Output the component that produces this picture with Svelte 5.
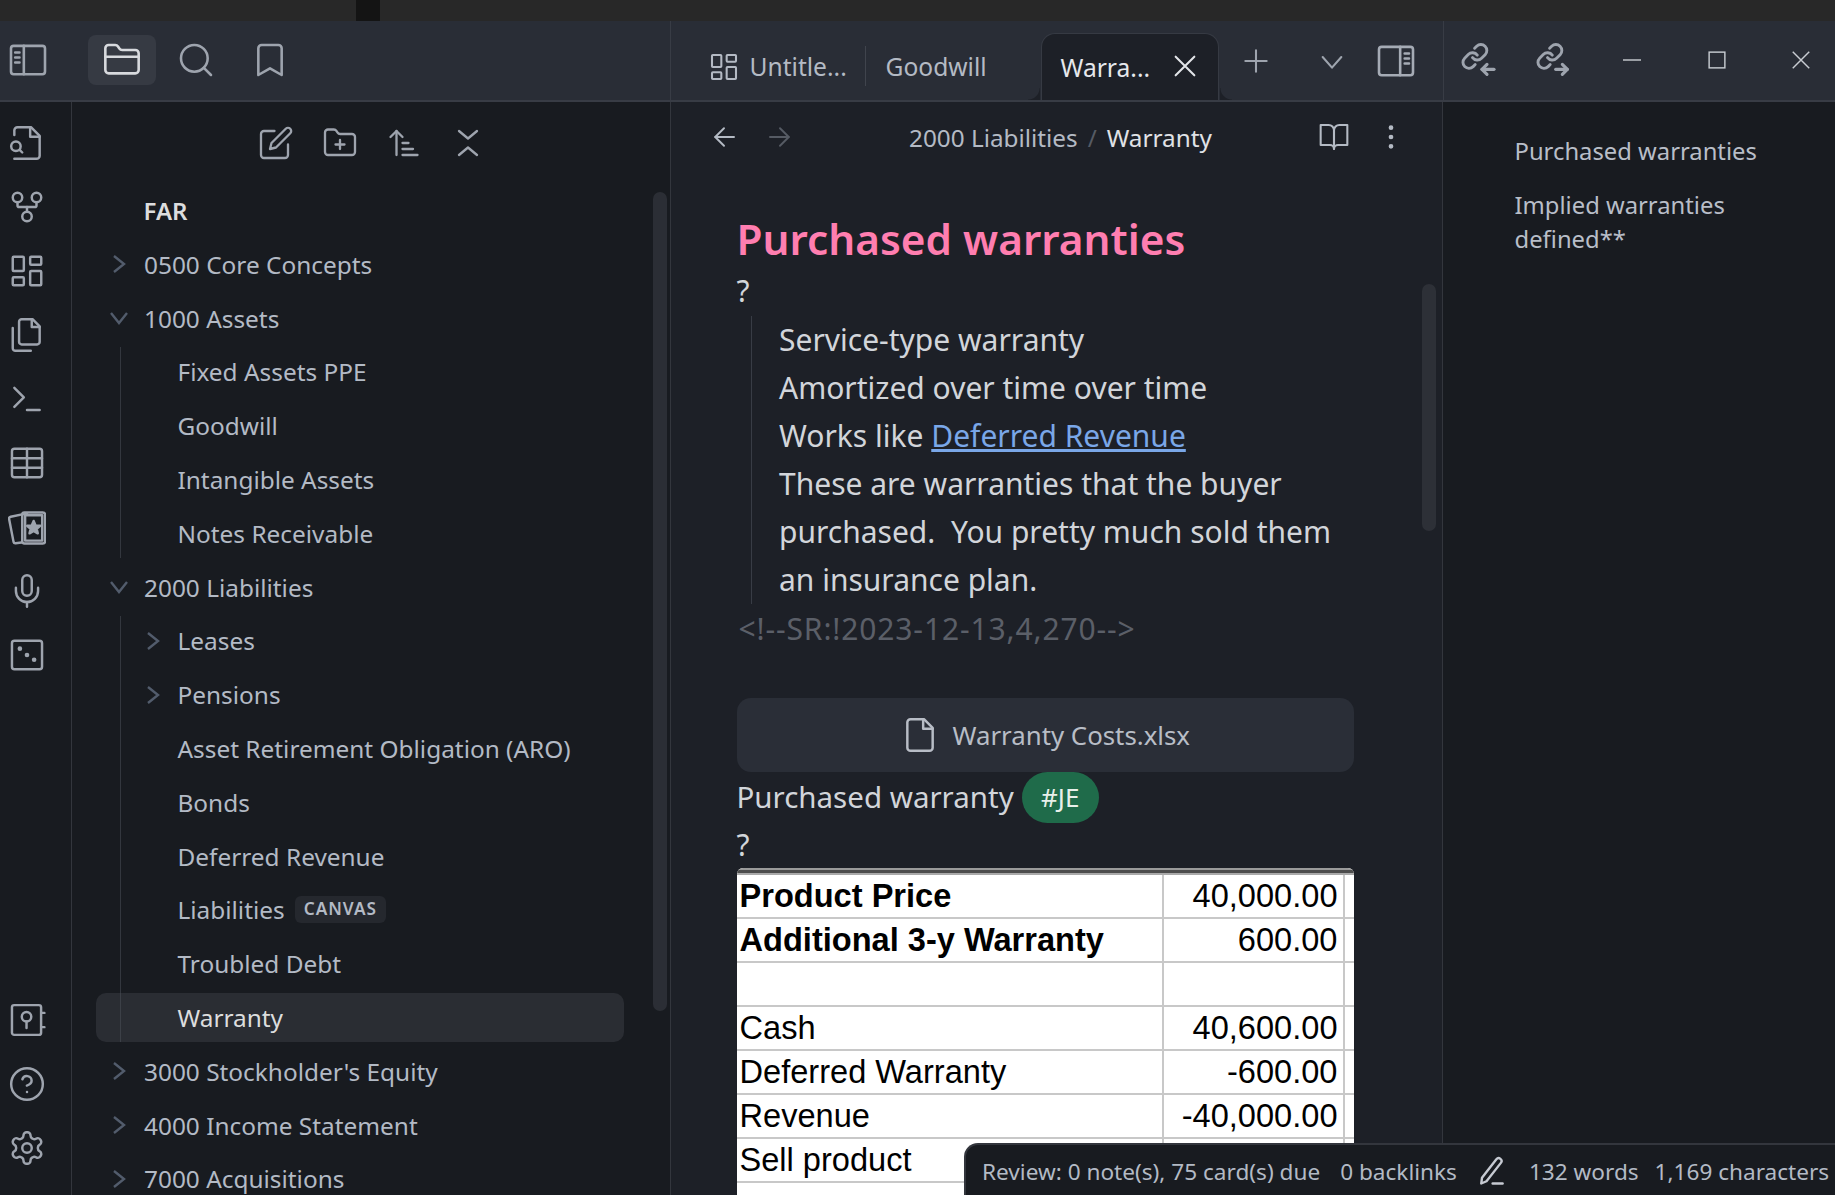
<script>
  const link = '<g transform="translate(1.5 1.2) scale(.72)" stroke-width="2.4"><path d="M10 13a5 5 0 0 0 7.54.54l3-3a5 5 0 0 0-7.07-7.07l-1.72 1.71"/><path d="M14 11a5 5 0 0 0-7.54-.54l-3 3a5 5 0 0 0 7.07 7.07l1.71-1.71"/></g>';
  const icons = {
    sidebarL: '<rect x="1.8" y="3.5" width="20.4" height="17" rx="1.6"/><path d="M9.5 3.5v17"/><path d="M4.3 7.5h2.6M4.3 10.5h2.6M4.3 13.5h2.6"/>',
    sidebarR: '<rect x="1.8" y="3.5" width="20.4" height="17" rx="1.6"/><path d="M14.5 3.5v17"/><path d="M17.2 7.5h2.6M17.2 10.5h2.6M17.2 13.5h2.6"/>',
    folder: '<path d="M20 20a2 2 0 0 0 2-2V8a2 2 0 0 0-2-2h-7.9a2 2 0 0 1-1.69-.9L9.6 3.9A2 2 0 0 0 7.93 3H4a2 2 0 0 0-2 2v13a2 2 0 0 0 2 2Z"/><path d="M2 10h20"/>',
    search: '<circle cx="11" cy="11" r="8"/><path d="m21 21-4.3-4.3"/>',
    bookmark: '<path d="m19 21-7-4-7 4V5a2 2 0 0 1 2-2h10a2 2 0 0 1 2 2v16z"/>',
    edit: '<path d="M11 4H4a2 2 0 0 0-2 2v14a2 2 0 0 0 2 2h14a2 2 0 0 0 2-2v-7"/><path d="M18.5 2.5a2.121 2.121 0 0 1 3 3L12 15l-4 1 1-4 9.5-9.5z"/>',
    folderPlus: '<path d="M20 20a2 2 0 0 0 2-2V8a2 2 0 0 0-2-2h-7.9a2 2 0 0 1-1.69-.9L9.6 3.9A2 2 0 0 0 7.93 3H4a2 2 0 0 0-2 2v13a2 2 0 0 0 2 2Z"/><path d="M12 10v6M9 13h6"/>',
    sort: '<path d="m3 8 4-4 4 4"/><path d="M7 4v16"/><path d="M11 12h4M11 16h7M11 20h10"/>',
    collapse: '<path d="m6 20 6-5 6 5"/><path d="m6 4 6 5 6-5"/>',
    fileSearch: '<path d="M4 22h14a2 2 0 0 0 2-2V7.5L14.5 2H6a2 2 0 0 0-2 2v3"/><path d="M14 2v6h6"/><path d="M5 17a3 3 0 1 0 0-6 3 3 0 0 0 0 6z"/><path d="m9 18-1.5-1.5"/>',
    fork: '<circle cx="12" cy="18" r="3"/><circle cx="6" cy="6" r="3"/><circle cx="18" cy="6" r="3"/><path d="M18 9v2c0 .6-.4 1-1 1H7c-.6 0-1-.4-1-1V9"/><path d="M12 12v3"/>',
    dashboard: '<rect x="3" y="3" width="7" height="9" rx="0.6"/><rect x="14" y="3" width="7" height="5" rx="0.6"/><rect x="14" y="12" width="7" height="9" rx="0.6"/><rect x="3" y="16" width="7" height="5" rx="0.6"/>',
    files: '<path d="M15.5 2H8.6c-.4 0-.8.2-1.1.5-.3.3-.5.7-.5 1.1v12.8c0 .4.2.8.5 1.1.3.3.7.5 1.1.5h9.8c.4 0 .8-.2 1.1-.5.3-.3.5-.7.5-1.1V6.5L15.5 2z"/><path d="M3 7.6v12.8c0 .4.2.8.5 1.1.3.3.7.5 1.1.5h9.8"/><path d="M15 2v5h5"/>',
    terminal: '<path d="m4 17 6-6-6-6"/><path d="M12 19h8"/>',
    table: '<rect x="2.5" y="3" width="19" height="18" rx="1.6"/><path d="M12 3v18M2.5 9h19M2.5 15h19"/>',
    cards: '<path d="M8.5 21.8 4.8 22.3a1.2 1.2 0 0 1-1.3-.9L.7 7a1.3 1.3 0 0 1 1-1.5L12 3.4"/><rect x="9" y="2.8" width="14.4" height="19.6" rx="1.4"/><rect x="10.8" y="4.6" width="10.8" height="16" /><polygon class="fillme" points="16.2,8.2 17.4,11 20.3,11.2 18.1,13.2 18.8,16 16.2,14.5 13.6,16 14.3,13.2 12.1,11.2 15,11"/>',
    mic: '<path d="M12 2a3 3 0 0 0-3 3v7a3 3 0 0 0 6 0V5a3 3 0 0 0-3-3Z"/><path d="M19 10v2a7 7 0 0 1-14 0v-2"/><path d="M12 19v3"/>',
    dice: '<rect x="2.5" y="3" width="19" height="18" rx="1.6"/><circle class="fillme" cx="7.5" cy="8" r=".7"/><circle class="fillme" cx="12" cy="12" r=".7"/><circle class="fillme" cx="16.5" cy="15" r=".7"/>',
    vault: '<rect x="2.5" y="2.6" width="18.4" height="18.8" rx="1.4"/><path d="M21 7.5h2M21 16.5h2"/><circle cx="11.7" cy="10" r="3"/><path d="M11.7 13v4"/>',
    help: '<circle cx="12" cy="12" r="10"/><path d="M9.09 9a3 3 0 0 1 5.83 1c0 2-3 3-3 3"/><path d="M12 17h.01"/>',
    gear: '<path d="M12.22 2h-.44a2 2 0 0 0-2 2v.18a2 2 0 0 1-1 1.73l-.43.25a2 2 0 0 1-2 0l-.15-.08a2 2 0 0 0-2.73.73l-.22.38a2 2 0 0 0 .73 2.73l.15.1a2 2 0 0 1 1 1.72v.51a2 2 0 0 1-1 1.74l-.15.09a2 2 0 0 0-.73 2.73l.22.38a2 2 0 0 0 2.73.73l.15-.08a2 2 0 0 1 2 0l.43.25a2 2 0 0 1 1 1.73V20a2 2 0 0 0 2 2h.44a2 2 0 0 0 2-2v-.18a2 2 0 0 1 1-1.73l.43-.25a2 2 0 0 1 2 0l.15.08a2 2 0 0 0 2.73-.73l.22-.39a2 2 0 0 0-.73-2.73l-.15-.08a2 2 0 0 1-1-1.74v-.5a2 2 0 0 1 1-1.74l.15-.09a2 2 0 0 0 .73-2.73l-.22-.38a2 2 0 0 0-2.73-.73l-.15.08a2 2 0 0 1-2 0l-.43-.25a2 2 0 0 1-1-1.73V4a2 2 0 0 0-2-2z"/><circle cx="12" cy="12" r="3"/>',
    plus: '<path d="M4 12h16M12 4v16"/>',
    chevDown: '<path d="m5 9 7 8 7-8"/>',
    x: '<path d="m5 5 14 14M19 5 5 19"/>',
    back: '<path d="M20 12H5"/><path d="m12 19-7-7 7-7"/>',
    forward: '<path d="M4 12h15"/><path d="m12 5 7 7-7 7"/>',
    book: '<path d="M2 3h6a4 4 0 0 1 4 4v14a3 3 0 0 0-3-3H2z"/><path d="M22 3h-6a4 4 0 0 0-4 4v14a3 3 0 0 1 3-3h7z"/>',
    dots: '<circle class="fillme" cx="12" cy="5" r="1"/><circle class="fillme" cx="12" cy="12" r="1"/><circle class="fillme" cx="12" cy="19" r="1"/>',
    file: '<path d="M14.5 2H6a2 2 0 0 0-2 2v16a2 2 0 0 0 2 2h12a2 2 0 0 0 2-2V7.5L14.5 2z"/><path d="M14 2v6h6"/>',
    pen: '<path d="M15.5 2.6a2.3 2.3 0 0 1 3.6 2.9L7.6 20.2 3.4 22l.6-4.6Z"/><path d="M12.5 22h8"/>',
    linkIn: link + '<path stroke-width="1.9" d="M21.6 17.6H14.4"/><path stroke-width="1.9" d="m17.4 14.6-3 3 3 3"/>',
    linkOut: link + '<path stroke-width="1.9" d="M13.6 17.6h7"/><path stroke-width="1.9" d="m17.6 14.6 3 3-3 3"/>',
    min: '<path d="M0 12h24"/>',
    max: '<rect x="1.5" y="1.5" width="21" height="21"/>',
    close: '<path d="m1 1 22 22M23 1 1 23"/>'
  };

  const ribbonTop = ['fileSearch', 'fork', 'dashboard', 'files', 'terminal', 'table', 'cards', 'mic', 'dice'];
  const ribbonBottom = ['vault', 'help', 'gear'];

  const assets = [
    { name: 'Fixed Assets PPE' }, { name: 'Goodwill' }, { name: 'Intangible Assets' }, { name: 'Notes Receivable' }
  ];
  const liabilities = [
    { name: 'Leases', chev: 'right' }, { name: 'Pensions', chev: 'right' },
    { name: 'Asset Retirement Obligation (ARO)' }, { name: 'Bonds' }, { name: 'Deferred Revenue' },
    { name: 'Liabilities', badge: 'CANVAS' }, { name: 'Troubled Debt' }, { name: 'Warranty', active: true }
  ];

  const tableRows = [
    { a: 'Product Price', b: '40,000.00', bold: true },
    { a: 'Additional 3-y Warranty', b: '600.00', bold: true },
    { a: '', b: '' },
    { a: 'Cash', b: '40,600.00' },
    { a: 'Deferred Warranty', b: '-600.00' },
    { a: 'Revenue', b: '-40,000.00' },
    { a: 'Sell product', b: '' },
    { a: '', b: '' }
  ];
</script>

{#snippet icon(name, cls)}
  <svg class={'ic ' + cls} viewBox="0 0 24 24" aria-hidden="true">{@html icons[name]}</svg>
{/snippet}

{#snippet chev(dir)}
  <svg class="chev" viewBox="0 0 30 30" aria-hidden="true">
    {#if dir === 'right'}<path d="M10 7 20 15 10 23" />{:else}<path d="M7 10 15 20 23 10" />{/if}
  </svg>
{/snippet}

{#snippet folderRow(name, dir)}
  <div class="row top">
    {@render chev(dir)}
    <span>{name}</span>
  </div>
{/snippet}

<div class="page">
  <div class="strip"><div class="notch"></div></div>

  <header class="titlebar">
    <div class="tb-left">
      <div class="tb-toggle">{@render icon('sidebarL', 's40')}</div>
      <div class="tb-btn on">{@render icon('folder', 's40')}</div>
      <div class="tb-btn">{@render icon('search', 's40')}</div>
      <div class="tb-btn">{@render icon('bookmark', 's40')}</div>
    </div>

    <div class="tb-tabs">
      <div class="tab first">{@render icon('dashboard', 's32')}<span>Untitle...</span></div>
      <div class="tab second"><span>Goodwill</span></div>
      <div class="tab active"><span>Warra...</span>{@render icon('x', 's32 light')}</div>
      <div class="tab-act plus">{@render icon('plus', 's32')}</div>
      <div class="tab-act down">{@render icon('chevDown', 's32')}</div>
      <div class="tab-act side">{@render icon('sidebarR', 's40')}</div>
    </div>

    <div class="tb-right">
      <div class="wbox">{@render icon('linkIn', 's40')}</div>
      <div class="wbox g35">{@render icon('linkOut', 's40')}</div>
      <div class="wbox g37">{@render icon('min', 's18 thin')}</div>
      <div class="wbox g45">{@render icon('max', 's18 thin')}</div>
      <div class="wbox g44">{@render icon('close', 's18 thin')}</div>
    </div>
  </header>

  <div class="workspace">
    <nav class="ribbon">
      <div class="rib-group">
        {#each ribbonTop as r}<div class="rib">{@render icon(r, 's38')}</div>{/each}
      </div>
      <div class="rib-group">
        {#each ribbonBottom as r}<div class="rib">{@render icon(r, 's38')}</div>{/each}
      </div>
    </nav>

    <aside class="explorer">
      <div class="nav-actions">
        {@render icon('edit', 's36')}
        {@render icon('folderPlus', 's36')}
        {@render icon('sort', 's36')}
        {@render icon('collapse', 's36')}
      </div>
      <div class="tree">
        <div class="row top root"><span class="far">FAR</span></div>
        {@render folderRow('0500 Core Concepts', 'right')}
        {@render folderRow('1000 Assets', 'down')}
        <div class="children">
          {#each assets as f}
            <div class="row child"><span>{f.name}</span></div>
          {/each}
        </div>
        {@render folderRow('2000 Liabilities', 'down')}
        <div class="children">
          {#each liabilities as f}
            <div class="row child" class:active={f.active} class:hasChev={f.chev}>
              {#if f.chev}{@render chev(f.chev)}{/if}
              <span>{f.name}</span>
              {#if f.badge}<span class="badge">{f.badge}</span>{/if}
            </div>
          {/each}
        </div>
        {@render folderRow("3000 Stockholder's Equity", 'right')}
        {@render folderRow('4000 Income Statement', 'right')}
        {@render folderRow('7000 Acquisitions', 'right')}
      </div>
      <div class="nav-thumb"></div>
    </aside>

    <main class="pane">
      <div class="view-head">
        <div class="vh-arrow">{@render icon('back', 's30')}</div>
        <div class="vh-arrow dim">{@render icon('forward', 's30')}</div>
        <div class="crumbs"><span>2000 Liabilities</span><span class="sep">/</span><span class="cur">Warranty</span></div>
        <div class="vh-book">{@render icon('book', 's32')}</div>
        <div class="vh-dots">{@render icon('dots', 's32')}</div>
      </div>

      <article class="note">
        <h1>Purchased warranties</h1>
        <p>?</p>
        <blockquote>
          Service-type warranty<br />
          Amortized over time over time<br />
          Works like <a href="#deferred">Deferred Revenue</a><br />
          These are warranties that the buyer<br />
          purchased.&nbsp; You pretty much sold them<br />
          an insurance plan.
        </blockquote>
        <p class="comment">&lt;!--SR:!2023-12-13,4,270--&gt;</p>
        <div class="attach">{@render icon('file', 's38')}<span>Warranty Costs.xlsx</span></div>
        <p class="tagline">Purchased warranty <span class="pill">#JE</span></p>
        <p class="q2">?</p>
        <div class="sheet">
          <div class="sheet-top"></div>
          {#each tableRows as t}
            <div class="sheet-row" class:bold={t.bold}>
              <div class="c1">{t.a}</div>
              <div class="c2">{t.b}</div>
              <div class="c3"></div>
            </div>
          {/each}
        </div>
      </article>
      <div class="note-thumb"></div>
    </main>

    <aside class="outline">
      <div class="o-item">Purchased warranties</div>
      <div class="o-item">Implied warranties defined**</div>
    </aside>
  </div>

  <footer class="status">
    <span>Review: 0 note(s), 75 card(s) due</span>
    <span class="st-b">0 backlinks</span>
    {@render icon('pen', 's30 bright')}
    <span class="st-w">132 words</span>
    <span class="st-c">1,169 characters</span>
  </footer>
</div>

<style>
  :global(body) { margin: 0; background: #181b20; }
  .page {
    position: relative;
    width: 1835px;
    height: 1195px;
    overflow: hidden;
    background: #181b20;
    color: #b8bec8;
    font-family: "Noto Sans", "Open Sans", sans-serif;
    font-size: 24.4px;
  }
  .strip { height: 21px; background: #282828; }
  .notch { width: 24px; height: 21px; margin-left: 356px; background: #141414; }

  .ic { fill: none; stroke: currentColor; stroke-width: 1.55; stroke-linecap: round; stroke-linejoin: round; display: block; flex: none; }
  .ic :global(.fillme) { fill: currentColor; }
  .s40 { width: 40px; height: 40px; }
  .s38 { width: 38px; height: 38px; }
  .s36 { width: 36px; height: 36px; }
  .s32 { width: 32px; height: 32px; }
  .s30 { width: 30px; height: 30px; }
  .s18 { width: 18px; height: 18px; }
  .thin { stroke-width: 1.9; stroke-linecap: butt; stroke-linejoin: miter; color: #c8ccd2; }
  .light { color: #e2e4e8; }
  .bright { color: #c6cad2; stroke-width: 1.9; }

  .titlebar { display: flex; height: 79px; background: #292d36; border-bottom: 2px solid #383c45; color: #9ea4ae; box-sizing: content-box; }
  .tb-left { width: 671px; flex: none; display: flex; align-items: center; gap: 6.5px; border-right: 1.5px solid #383c45; box-sizing: border-box; padding-left: 8px; padding-bottom: 2px; }
  .tb-toggle { width: 40px; margin-right: 33.5px; }
  .tb-btn { width: 67.5px; height: 50px; display: flex; align-items: center; justify-content: center; border-radius: 8px; }
  .tb-btn.on { background: #363a43; color: #d8dade; }

  .tb-tabs { width: 772px; flex: none; display: flex; align-items: flex-end; box-sizing: border-box; }
  .tab { display: flex; align-items: center; height: 67px; box-sizing: border-box; color: #b4bac4; font-size: 24.6px; }
  .tab.first { width: 195px; padding-left: 37px; gap: 9.5px; position: relative; }
  .tab.first::after { content: ""; position: absolute; right: 0; top: 13px; height: 40px; width: 1.5px; background: #40444d; }
  .tab.second { width: 174.5px; padding-left: 19.5px; }
  .tab.active {
    position: relative;
    width: 178.5px;
    padding-left: 19px;
    padding-right: 17px;
    background: #1d2027;
    color: #e6e8ec;
    border-radius: 14px 14px 0 0;
    border: 1.5px solid #363a43;
    border-bottom: none;
    justify-content: space-between;
  }
  .tab.active .ic { margin-top: -2px; }
  .tab.active::before, .tab.active::after { content: ""; position: absolute; bottom: 0; width: 12px; height: 12px; }
  .tab.active::before { left: -13.5px; background: radial-gradient(circle at 0 0, #292d36 11px, #1d2027 12px); }
  .tab.active::after { right: -13.5px; background: radial-gradient(circle at 100% 0, #292d36 11px, #1d2027 12px); }
  .tab-act { height: 67px; display: flex; align-items: center; justify-content: center; width: 40px; padding-bottom: 12px; box-sizing: border-box; }
  .tab-act.plus { margin-left: 16.5px; }
  .tab-act.down { margin-left: 36px; }
  .tab-act.side { margin-left: 24px; color: #a5abb5; }

  .tb-right { flex: 1; display: flex; align-items: center; padding-left: 14px; border-left: 1.5px solid #383c45; padding-bottom: 1px; }
  .wbox { width: 40px; display: flex; justify-content: center; }
  .g35 { margin-left: 35px; }
  .g37 { margin-left: 38.5px; }
  .g45 { margin-left: 45px; }
  .g44 { margin-left: 44px; }

  .workspace { display: flex; height: 1094px; }
  .ribbon { width: 71.5px; flex: none; box-sizing: border-box; border-right: 1.5px solid #33363d; display: flex; flex-direction: column; justify-content: space-between; padding: 9px 0 16px; height: 1094px; color: #9ea4ae; }
  .rib-group { display: flex; flex-direction: column; }
  .rib { width: 54px; height: 64px; display: flex; align-items: center; justify-content: center; }

  .explorer { position: relative; width: 598.5px; flex: none; background: #181b20; border-right: 1.5px solid #33363d; }
  .nav-actions { display: flex; height: 84px; box-sizing: border-box; padding-bottom: 2px; align-items: center; justify-content: flex-start; padding-left: 186px; gap: 28.3px; color: #9ea4ae; }
  .tree { margin-left: 24.5px; width: 528px; }
  .row { display: flex; align-items: center; height: 49px; margin-bottom: 4.8px; color: #b3bac5; }
  .row.top { padding-left: 8px; gap: 10px; }
  .row.root { padding-left: 47.5px; }
  .far { font-weight: 600; color: #dcddde; font-size: 24px; }
  .chev { width: 30px; height: 30px; fill: none; stroke: #525c6c; stroke-width: 2.4; flex: none; }
  .children { margin-left: 24px; border-left: 1.5px solid #33373e; }
  .children .row { padding-left: 56.5px; }
  .children .row.hasChev { padding-left: 16.5px; gap: 10px; }
  .children .row.active { margin-left: -25.5px; padding-left: 82px; background: #2a2d33; border-radius: 10px; color: #dcddde; position: relative; }
  .children .row.active::before { content: ""; position: absolute; left: 24px; top: 0; bottom: 0; width: 1.5px; background: #3c4047; }
  .badge { margin-left: 10px; padding: 0 9px; height: 27px; line-height: 26px; background: #25282e; border-radius: 6px; font-size: 17.2px; font-weight: 600; letter-spacing: 1px; color: #b3bac5; }
  .nav-thumb { position: absolute; right: 3px; top: 90px; width: 14px; height: 819px; background: #2b2e35; border-radius: 7px; }

  .pane { position: relative; width: 771px; flex: none; background: #1d2027; box-sizing: content-box; border-right: 1.5px solid #33363d; overflow: hidden; }
  .view-head { position: relative; display: flex; align-items: center; height: 72px; padding-left: 38px; padding-bottom: 2px; box-sizing: border-box; color: #b4bac4; }
  .vh-arrow { width: 30px; margin-right: 26px; }
  .vh-arrow.dim { color: #565b64; }
  .crumbs { margin-left: 88px; display: flex; align-items: center; gap: 10px; font-size: 24.3px; }
  .sep { color: #565b64; }
  .cur { color: #e0e2e6; }
  .vh-book { margin-left: 106px; }
  .vh-dots { margin-left: 25px; }

  .note { padding-left: 65.5px; width: 617.5px; color: #d2d5da; font-size: 30px; line-height: 48px; }
  .note p { margin: 0; }
  h1 { margin: 39px 0 0; height: 54px; line-height: 52px; font-size: 42.3px; font-weight: 600; color: #ff7eb0; }
  blockquote { margin: 1px 0 0 14.5px; padding-left: 27px; border-left: 1.5px solid #383c45; }
  a { color: #7aa7e8; text-decoration: underline; }
  .note .comment { color: #5b5f68; margin-top: 1px; letter-spacing: .87px; padding-left: 2px; }
  .attach { display: flex; align-items: center; justify-content: center; gap: 14px; height: 74px; margin-top: 45px; background: #2a2e37; border-radius: 14px; color: #b8bdc6; font-size: 25.8px; }
  .note .tagline { display: flex; align-items: center; gap: 8px; height: 48px; margin-top: 1px; font-size: 29.5px; }
  .pill { display: flex; align-items: center; justify-content: center; width: 77px; height: 51px; border-radius: 26px; background: #1f6b4a; color: #e8f0ea; font-size: 26px; flex: none; }
  .note .q2 { margin-top: 0; }
  .sheet { margin-top: -1px; background: #fff; color: #000; font-family: "Liberation Sans", Arial, sans-serif; font-size: 32.6px; line-height: 42px; border-radius: 6px 6px 0 0; overflow: hidden; }
  .sheet-top { height: 7px; background: linear-gradient(#9a9a9a 0 2px, #4d4d4d 2px 5px, #aaa 5px); }
  .sheet-row { display: grid; grid-template-columns: 427px 181px 9.5px; height: 44px; box-sizing: border-box; border-bottom: 2px solid #c8c8c8; }
  .sheet-row.bold .c1 { font-weight: 700; }
  .c1 { padding-left: 3px; border-right: 2px solid #c8c8c8; white-space: nowrap; }
  .c2 { text-align: right; padding-right: 5px; border-right: 2px solid #c8c8c8; }
  .note-thumb { position: absolute; left: 751px; top: 182px; width: 14px; height: 247px; background: #2d3037; border-radius: 7px; }

  .outline { flex: 1; padding: 32px 0 0 71.5px; color: #b8bec8; line-height: 34px; font-size: 23.8px; }
  .o-item { width: 290px; margin-bottom: 20px; }

  .status { position: absolute; right: 0; bottom: 0; left: 964px; height: 52px; display: flex; align-items: center; padding: 2px 0 0 16px; box-sizing: border-box; background: #181b20; border-top: 2px solid #33363d; border-left: 2px solid #33363d; border-top-left-radius: 14px; font-size: 22.6px; color: #b3bac5; white-space: nowrap; }
  .st-b { margin-left: 20px; margin-right: 20px; }
  .st-w { margin-left: 22px; }
  .st-c { margin-left: 16px; }
</style>
